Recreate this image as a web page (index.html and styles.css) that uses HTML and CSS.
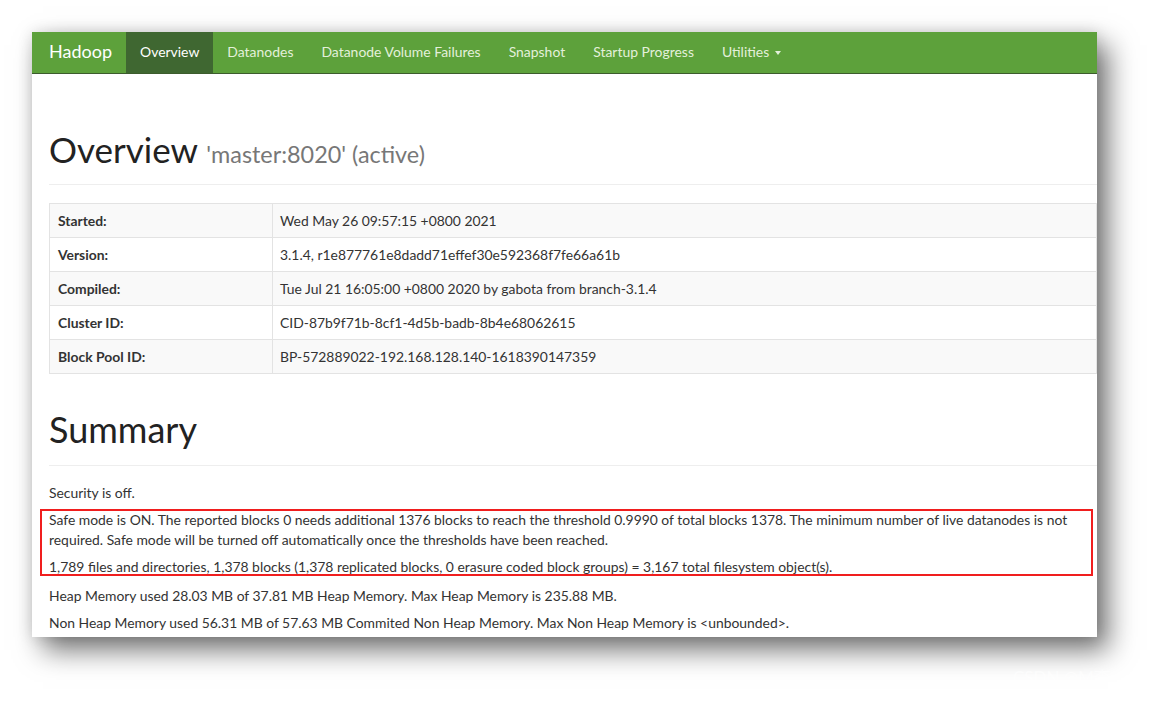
FILE: index.html
```html
<!DOCTYPE html>
<html lang="en">
<head>
<meta charset="utf-8">
<title>Namenode information</title>
<link rel="stylesheet" href="styles.css">
</head>
<body>
<div class="shot">
  <nav class="navbar">
    <a class="brand">Hadoop</a>
    <ul class="nav">
      <li class="active"><a>Overview</a></li>
      <li><a>Datanodes</a></li>
      <li><a>Datanode Volume Failures</a></li>
      <li><a>Snapshot</a></li>
      <li><a>Startup Progress</a></li>
      <li><a>Utilities <span class="caret"></span></a></li>
    </ul>
  </nav>
  <div class="container">
    <div class="page-header first">
      <h1>Overview <small>'master:8020' (active)</small></h1>
    </div>
    <table class="info">
      <tr><th>Started:</th><td>Wed May 26 09:57:15 +0800 2021</td></tr>
      <tr><th>Version:</th><td>3.1.4, r1e877761e8dadd71effef30e592368f7fe66a61b</td></tr>
      <tr><th>Compiled:</th><td>Tue Jul 21 16:05:00 +0800 2020 by gabota from branch-3.1.4</td></tr>
      <tr><th>Cluster ID:</th><td>CID-87b9f71b-8cf1-4d5b-badb-8b4e68062615</td></tr>
      <tr><th>Block Pool ID:</th><td>BP-572889022-192.168.128.140-1618390147359</td></tr>
    </table>
    <div class="page-header">
      <h1>Summary</h1>
    </div>
    <p>Security is off.</p>
    <div class="highlight">
      <p class="safe">Safe mode is ON. The reported blocks 0 needs additional 1376 blocks to reach the threshold 0.9990 of total blocks 1378. The minimum number of live datanodes is not required. Safe mode will be turned off automatically once the thresholds have been reached.</p>
      <p>1,789 files and directories, 1,378 blocks (1,378 replicated blocks, 0 erasure coded block groups) = 3,167 total filesystem object(s).</p>
      <span class="mark"></span>
    </div>
    <p>Heap Memory used 28.03 MB of 37.81 MB Heap Memory. Max Heap Memory is 235.88 MB.</p>
    <p>Non Heap Memory used 56.31 MB of 57.63 MB Commited Non Heap Memory. Max Non Heap Memory is &lt;unbounded&gt;.</p>
  </div>
</div>
<div class="watermark">CSDN @M李</div>
</body>
</html>
```

FILE: styles.css
```css
html, body {
  margin: 0;
  padding: 0;
  background: #fff;
}

body {
  font-family: Lato, "Noto Sans CJK SC", sans-serif;
  color: #333;
  font-size: 13.9px;
  line-height: 20px;
  position: relative;
  height: 703px;
  overflow: hidden;
}

.shot {
  position: relative;
  margin: 32px 0 0 32px;
  width: 1065px;
  height: 605px;
  overflow: hidden;
  background: #fff;
  box-shadow: 11px 13px 26px rgba(0, 0, 0, 0.55), 0 0 14px rgba(0, 0, 0, 0.12);
}

.navbar {
  display: flex;
  height: 41px;
  background: #5da13b;
  border-bottom: 1px solid #3c5c2d;
}

.brand {
  padding: 0 14px 2px 17px;
  font-size: 18px;
  line-height: 39px;
  color: #fff;
}

.nav {
  display: flex;
  margin: 0;
  padding: 0;
  list-style: none;
}

.nav a {
  display: block;
  padding: 0 14px 2px;
  line-height: 39px;
  font-size: 13.95px;
  color: #e3f0da;
}

.nav .active a {
  background: #3f6731;
  color: #fff;
}

.caret {
  display: inline-block;
  width: 0;
  height: 0;
  margin-left: 2px;
  vertical-align: middle;
  border-top: 4px solid #e3f0da;
  border-left: 3.5px solid transparent;
  border-right: 3.5px solid transparent;
}

.container {
  padding-left: 17px;
}

.page-header {
  margin: 35px 0 17px;
  padding-bottom: 16px;
  border-bottom: 1px solid #eee;
}

.page-header.first {
  margin: 55px 0 18px;
  padding-bottom: 15px;
}

h1 {
  margin: 0;
  font-size: 36px;
  line-height: 40px;
  font-weight: 400;
  color: #222;
}

.first h1 {
  font-size: 35px;
}

h1 small {
  font-size: 23.4px;
  line-height: 1;
  color: #777;
}

.info {
  width: 100%;
  border-collapse: collapse;
  border: 1px solid #e3e3e3;
}

.info th,
.info td {
  padding: 6px 8px;
  line-height: 21px;
  text-align: left;
  border: 1px solid #e3e3e3;
}

.info th {
  width: 206px;
  font-weight: 700;
}

.info td {
  padding-left: 7px;
}

.info tr:nth-child(odd) {
  background: #f9f9f9;
}

p {
  margin: 0 0 7px;
}

.highlight {
  position: relative;
  margin-bottom: 9px;
}

.safe {
  width: 1040px;
}

.mark {
  position: absolute;
  left: -9px;
  top: -1px;
  width: 1053px;
  height: 67px;
  box-sizing: border-box;
  border: 2px solid #f01e1e;
}

.watermark {
  position: absolute;
  left: 1013px;
  top: 668px;
  font-size: 17px;
  line-height: 20px;
  color: rgba(255, 255, 255, 0.55);
}
```
